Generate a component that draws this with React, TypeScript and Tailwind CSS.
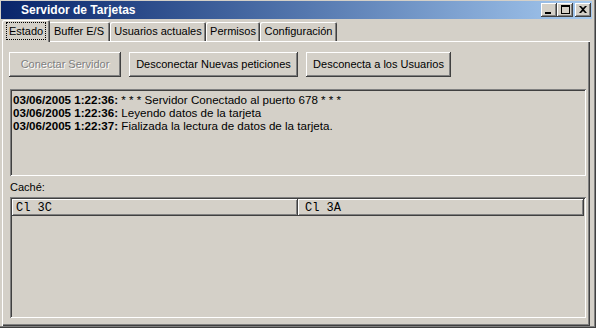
import React from "react";

const raised =
  "shadow-[inset_-1px_-1px_#404040,inset_1px_1px_#ffffff,inset_-2px_-2px_#808080,inset_2px_2px_#d4d0c8]";
const sunken =
  "shadow-[inset_1px_1px_#808080,inset_-1px_-1px_#ffffff,inset_2px_2px_#404040,inset_-2px_-2px_#d4d0c8]";

function CaptionButton({ kind }: { kind: "min" | "max" | "close" }) {
  return (
    <div className={`flex h-[14px] w-[16px] items-center justify-center bg-[#d4d0c8] ${raised}`}>
      {kind === "min" && <div className="mt-[6px] mr-[2px] h-[2px] w-[6px] bg-black" />}
      {kind === "max" && (
        <div className="mb-[1px] h-[9px] w-[9px] border border-t-2 border-black" />
      )}
      {kind === "close" && (
        <svg width="8" height="7" viewBox="0 0 8 7" className="mb-[1px]">
          <path d="M0 0h2l2 2 2-2h2L5 3.5 8 7H6L4 5 2 7H0l3-3.5z" fill="#000" />
        </svg>
      )}
    </div>
  );
}

const tabs = [
  { label: "Estado", w: "w-[48px]" },
  { label: "Buffer E/S", w: "w-[62px]" },
  { label: "Usuarios actuales", w: "w-[96px]" },
  { label: "Permisos", w: "w-[54px]" },
  { label: "Configuración", w: "w-[77px]" },
];

const log = [
  ["03/06/2005 1:22:36:", "* * * Servidor Conectado al puerto 678 * * *"],
  ["03/06/2005 1:22:36:", "Leyendo datos de la tarjeta"],
  ["03/06/2005 1:22:37:", "Fializada la lectura de datos de la tarjeta."],
];

export default function App() {
  return (
    <div className="h-[328px] w-[596px] overflow-hidden bg-[#d4d0c8] font-['Liberation_Sans',Arial,sans-serif] text-[11px] text-black">
      <div className="flex h-full flex-col pt-[1px] pr-[4px] pb-[2px] pl-[1px] shadow-[inset_-1px_-1px_#404040,inset_-2px_-2px_#808080]">
        {/* title bar */}
        <div className="flex h-[18px] items-center bg-gradient-to-r from-[#0a246a] to-[#a6caf0] pl-[20px] pr-[1px]">
          <span className="text-[12px] font-bold text-white">Servidor de Tarjetas</span>
          <div className="ml-auto flex items-center">
            <CaptionButton kind="min" />
            <CaptionButton kind="max" />
            <div className="w-[2px]" />
            <CaptionButton kind="close" />
          </div>
        </div>

        {/* tabs */}
        <div className="mt-[1px] ml-[1px] mr-[2px] flex flex-1 flex-col">
          <div className="flex h-[21px] items-end">
            {tabs.map((t, i) =>
              i === 0 ? (
                <div
                  key={t.label}
                  className={`relative z-10 -mb-[1px] flex h-[22px] ${t.w} items-start justify-center rounded-t-[2px] bg-[#d4d0c8] pt-[2px] shadow-[inset_1px_1px_#ffffff,inset_-1px_0_#404040,inset_-2px_0_#808080]`}
                >
                  <span className="border border-dotted border-black px-[2px] leading-[16px]">
                    {t.label}
                  </span>
                </div>
              ) : (
                <div
                  key={t.label}
                  className={`flex h-[19px] ${t.w} ${i === 1 ? "-ml-[2px]" : ""} items-center justify-center rounded-t-[2px] pb-[1px] shadow-[inset_1px_1px_#ffffff,inset_-1px_0_#404040,inset_-2px_0_#808080]`}
                >
                  {t.label}
                </div>
              )
            )}
          </div>

          {/* tab panel */}
          <div className="flex flex-1 flex-col pt-[11px] pl-[7px] shadow-[inset_1px_1px_#ffffff,inset_-1px_-1px_#404040,inset_-2px_-2px_#808080]">
            <div className="flex gap-[8px]">
              <button
                className={`h-[25px] w-[112px] text-[#808080] [text-shadow:1px_1px_0_#ffffff] ${raised}`}
              >
                Conectar Servidor
              </button>
              <button className={`h-[25px] w-[169px] ${raised}`}>
                Desconectar Nuevas peticiones
              </button>
              <button className={`h-[25px] w-[145px] ${raised}`}>
                Desconecta a los Usuarios
              </button>
            </div>

            <div className={`mt-[12px] ml-[1px] h-[87px] w-[576px] pt-[4px] pl-[3px] text-[11.6px] ${sunken}`}>
              {log.map(([d, m], i) => (
                <div key={i} className="leading-[13px]">
                  <span className="font-bold">{d}</span> {m}
                </div>
              ))}
            </div>

            <div className="mt-[5px] ml-[1px] leading-[13px]">Caché:</div>

            <div className={`mt-[3px] ml-[1px] h-[121px] w-[576px] p-[2px] ${sunken}`}>
              <div className="flex h-[17px] font-['Liberation_Mono','Courier_New',monospace] text-[12px]">
                <div className={`flex w-[286px] items-center pl-[4px] ${raised}`}>Cl 3C</div>
                <div className={`flex flex-1 items-center pl-[7px] ${raised}`}>Cl 3A</div>
              </div>
            </div>
          </div>
        </div>
      </div>
    </div>
  );
}
